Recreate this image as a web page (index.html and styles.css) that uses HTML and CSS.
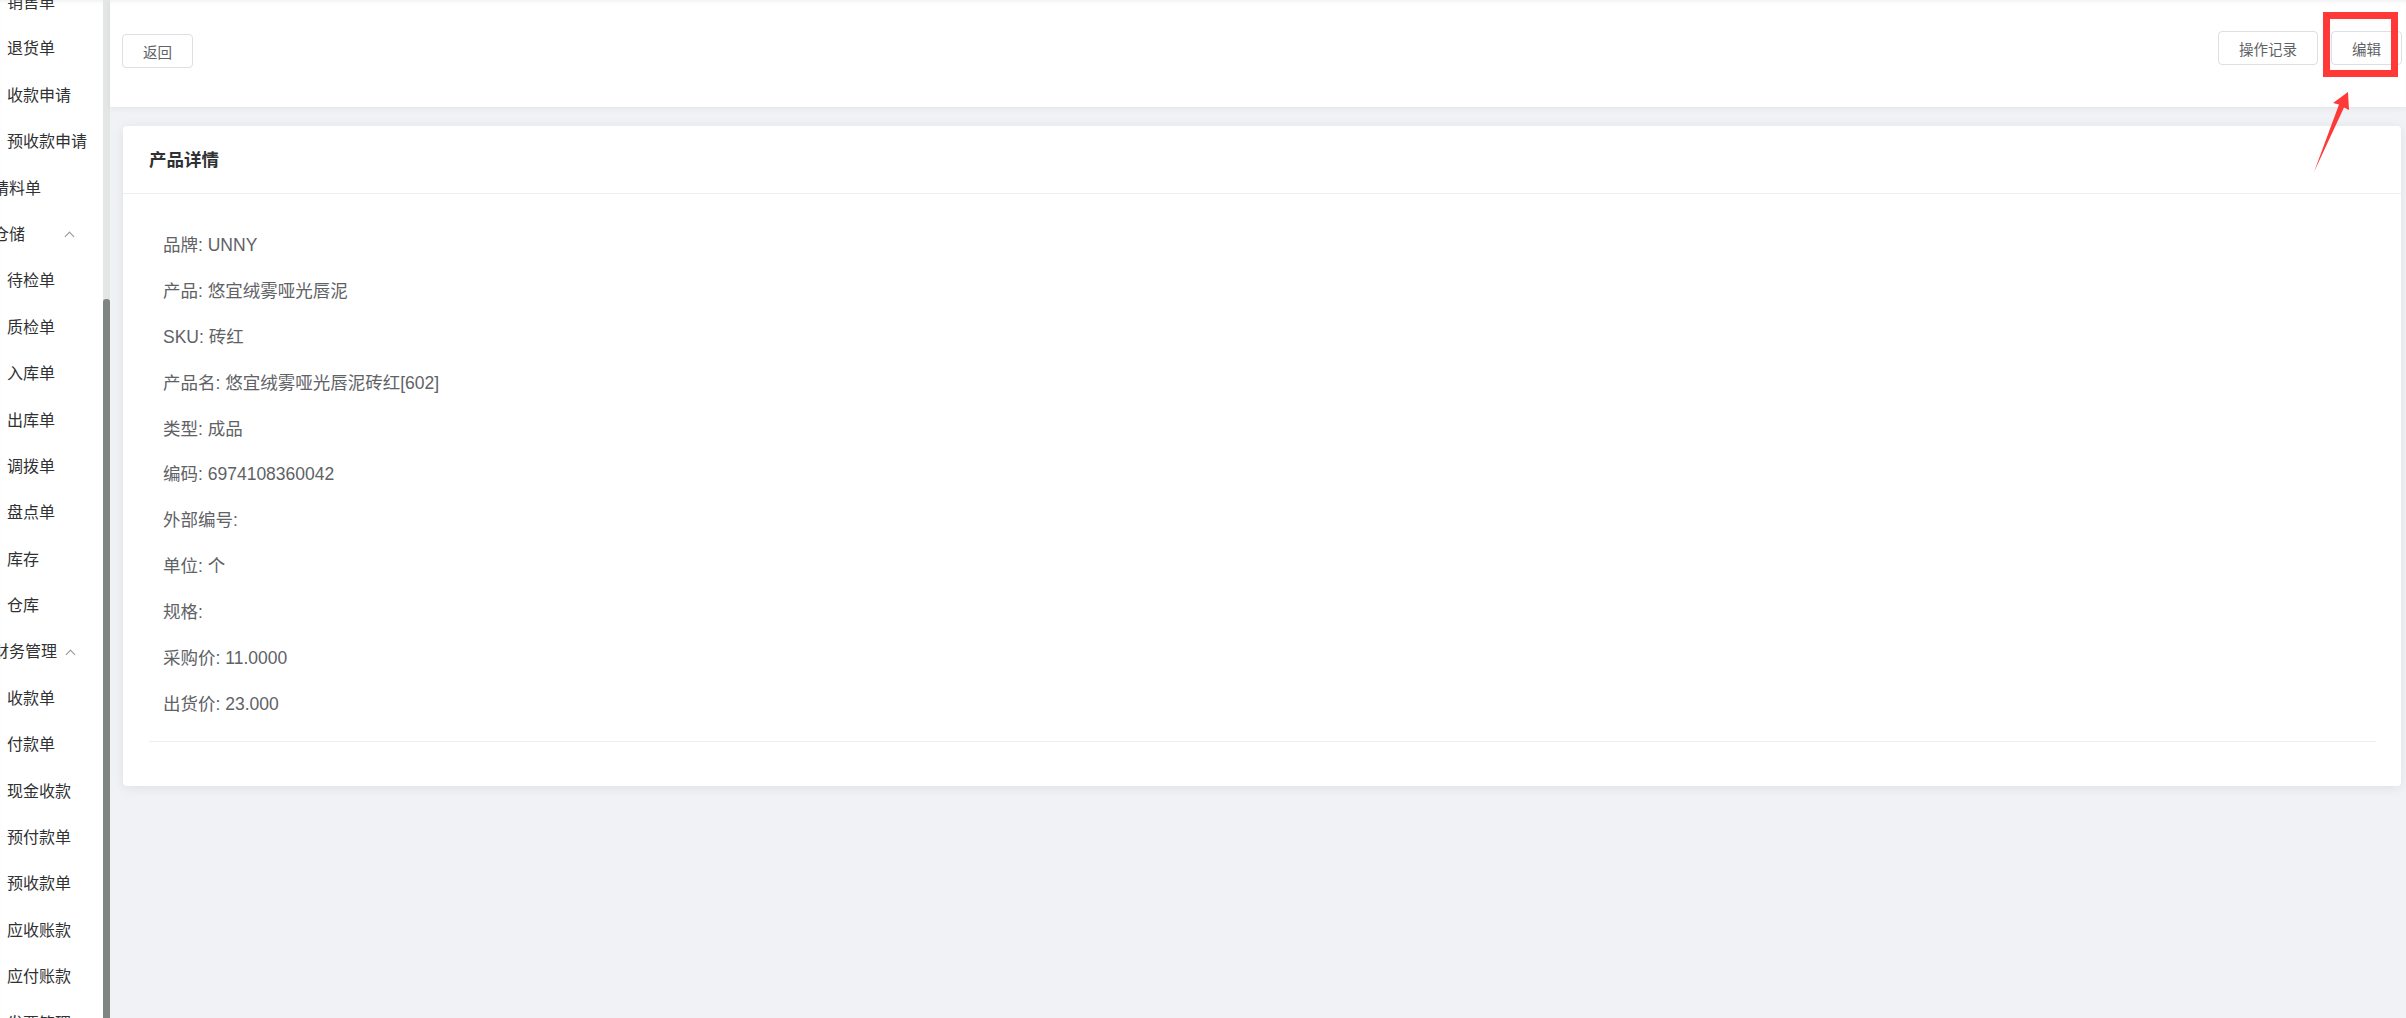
FILE: index.html
```html
<!DOCTYPE html>
<html lang="zh-CN">
<head>
<meta charset="UTF-8">
<link rel="stylesheet" href="styles.css">
</head>
<body>

<div class="layout">
    <div class="sidebar">
        <ul class="menu">
            <li class="sub">销售单</li>
            <li class="sub">退货单</li>
            <li class="sub">收款申请</li>
            <li class="sub">预收款申请</li>
            <li class="parent">请料单</li>
            <li class="parent">仓储 <span class="chev"></span></li>
            <li class="sub">待检单</li>
            <li class="sub">质检单</li>
            <li class="sub">入库单</li>
            <li class="sub">出库单</li>
            <li class="sub">调拨单</li>
            <li class="sub">盘点单</li>
            <li class="sub">库存</li>
            <li class="sub">仓库</li>
            <li class="parent">财务管理 <span class="chev"></span></li>
            <li class="sub">收款单</li>
            <li class="sub">付款单</li>
            <li class="sub">现金收款</li>
            <li class="sub">预付款单</li>
            <li class="sub">预收款单</li>
            <li class="sub">应收账款</li>
            <li class="sub">应付账款</li>
            <li class="sub">发票管理</li>
        </ul>
        <div class="scrollbar"><div class="thumb"></div></div>
    </div>

    <div class="main">
        <div class="toolbar">
            <button class="btn back">返回</button>
            <div class="actions">
                <button class="btn">操作记录</button>
                <button class="btn">编辑</button>
            </div>
        </div>

        <div class="card">
            <div class="card-header">产品详情</div>
            <div class="card-body">
                <div class="row">品牌: UNNY</div>
                <div class="row">产品: 悠宜绒雾哑光唇泥</div>
                <div class="row">SKU: 砖红</div>
                <div class="row">产品名: 悠宜绒雾哑光唇泥砖红[602]</div>
                <div class="row">类型: 成品</div>
                <div class="row">编码: 6974108360042</div>
                <div class="row">外部编号:</div>
                <div class="row">单位: 个</div>
                <div class="row">规格:</div>
                <div class="row">采购价: 11.0000</div>
                <div class="row">出货价: 23.000</div>
                <div class="divider"></div>
            </div>
        </div>
    </div>
</div>

<!-- annotation -->
<div class="mark"></div>
<svg class="arrow" width="60" height="100" viewBox="0 0 60 100">
    <polygon points="48,12 33,23 39,24.5 14,92 44,27.5 49,30" fill="#ff3838"/>
</svg>

</body>
</html>
```

FILE: styles.css
```css
* { margin: 0; padding: 0; box-sizing: border-box; }

body {
    position: relative;
    height: 1018px;
    overflow: hidden;
    font-family: "Liberation Sans", "Noto Sans CJK SC", sans-serif;
    background: #f0f2f5;
}

.layout {
    display: flex;
    height: 1018px;
}

/* sidebar */
.sidebar {
    display: flex;
    width: 110px;
    flex-shrink: 0;
    background: #fff;
    overflow: hidden;
    box-shadow: inset 0 3px 4px -2px rgba(0,0,0,0.08);
}

.menu {
    list-style: none;
    width: 103px;
    margin-top: -20px;
}

.menu li {
    height: 46.4px;
    line-height: 46.4px;
    font-size: 16px;
    color: #303133;
    white-space: nowrap;
}

.menu li.sub { padding-left: 7px; }
.menu li.parent { margin-left: -7px; }

.chev {
    display: inline-block;
    width: 7px;
    height: 7px;
    border-left: 1px solid #909399;
    border-top: 1px solid #909399;
    transform: rotate(45deg);
    vertical-align: middle;
    margin-top: 2px;
}

.menu li:nth-child(6) .chev { margin-left: 37px; }
.menu li:nth-child(15) .chev { margin-left: 6px; }

.scrollbar {
    width: 7px;
    flex-shrink: 0;
    background: #e4e6e6;
}

.thumb {
    margin-top: 299px;
    height: 760px;
    background: #7e8582;
    border-radius: 3px 3px 0 0;
}

/* main */
.main {
    flex: 1;
    display: flex;
    flex-direction: column;
}

.toolbar {
    height: 107px;
    display: flex;
    justify-content: space-between;
    align-items: flex-start;
    padding: 0 4px 0 12px;
    background: #fff;
    box-shadow: inset 0 3px 4px -2px rgba(0,0,0,0.08), 0 2px 6px rgba(0,0,0,0.05);
}

.btn {
    height: 34px;
    padding: 0 20px;
    border: 1px solid #dcdfe6;
    border-radius: 4px;
    background: #fff;
    color: #606266;
    font-family: inherit;
    font-size: 14.5px;
}

.back { margin-top: 34px; }

.actions {
    display: flex;
    gap: 13px;
    margin-top: 31px;
}

.card {
    margin: 19px 5px 0 13px;
    background: #fff;
    border-radius: 4px;
    box-shadow: 0 2px 12px rgba(0,0,0,0.08);
}

.card-header {
    height: 68px;
    line-height: 69px;
    padding-left: 26px;
    font-size: 17.5px;
    font-weight: bold;
    color: #303133;
    border-bottom: 1px solid #ebeef5;
}

.card-body {
    padding: 29px 25px 44px 26px;
}

.row {
    height: 45.9px;
    line-height: 45.9px;
    padding-left: 14px;
    font-size: 17.5px;
    color: #606266;
}

.divider {
    margin-top: 13px;
    border-top: 1px solid #ebeef5;
}

/* red annotation over the edit button */
.mark {
    position: absolute;
    left: 2323px;
    top: 12px;
    width: 75px;
    height: 65px;
    border: 7px solid #ff3838;
}

.arrow {
    position: absolute;
    left: 2300px;
    top: 80px;
}
```
